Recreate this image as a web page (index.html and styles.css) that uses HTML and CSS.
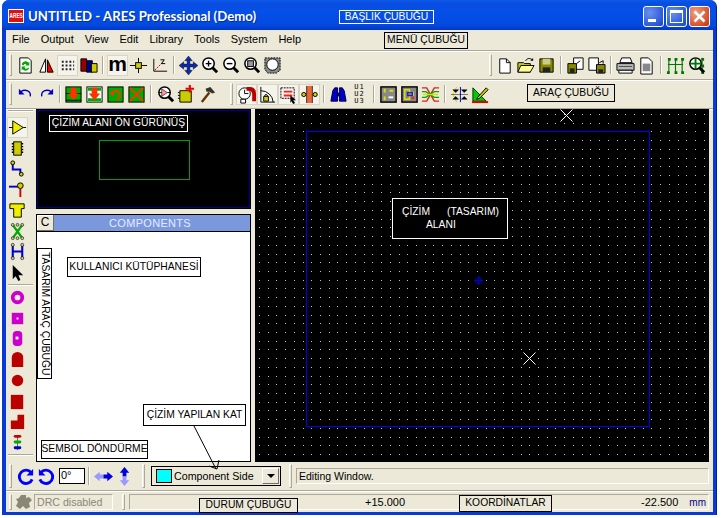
FILE: index.html
```html
<!DOCTYPE html>
<html lang="tr">
<head>
<meta charset="utf-8">
<title>ARES Professional</title>
<link rel="stylesheet" href="styles.css">
</head>
<body>
<svg class="defs" width="0" height="0">
  <defs>
    <g id="lens"><circle cx="9" cy="8" r="6" fill="#fff" stroke="#000" stroke-width="1.6"/><path d="M13 12l5 5" stroke="#000" stroke-width="3"/></g>
  </defs>
</svg>
<div class="window">
  <header class="titlebar">
    <span class="logo"><span class="logo-text">ARES</span></span>
    <span class="title">UNTITLED - ARES Professional (Demo)</span>
    <span class="winbtns">
      <span class="wb wb-blue"><i class="g-min"></i></span>
      <span class="wb wb-blue"><i class="g-max"></i></span>
      <span class="wb wb-red"><svg width="21" height="21" viewBox="0 0 21 21"><path d="M5.5 5.5l10 10M15.5 5.5l-10 10" stroke="#fff" stroke-width="2.6"/></svg></span>
    </span>
  </header>
  <div class="client">
    <nav class="menubar">
      <span>File</span><span>Output</span><span>View</span><span>Edit</span><span>Library</span><span>Tools</span><span>System</span><span>Help</span>
    </nav>
    <div class="tb">
      <i class="grip"></i>
      <span class="b"><svg class="ic" viewBox="0 0 20 20"><path d="M4 2h9l3 3v13H4z" fill="#fff" stroke="#000"/><path d="M6 9a4 4 0 0 1 7-2l1-1v4h-4l1-1a2 2 0 0 0-3 1z" fill="#0a0"/><path d="M14 12a4 4 0 0 1-7 2l-1 1v-4h4l-1 1a2 2 0 0 0 3 1z" fill="#0a0"/></svg></span>
      <span class="b"><svg class="ic" viewBox="0 0 20 20"><path d="M9 3L3 17h6z" fill="#fff" stroke="#000"/><path d="M11 4v13h6z" fill="#e00" stroke="#000"/></svg></span>
      <span class="b on"><svg class="ic" viewBox="0 0 20 20"><path d="M4 5h2v2H4zM8 5h2v2H8zM12 5h2v2h-2zM16 5h1v2h-1zM4 9h2v2H4zM8 9h2v2H8zM12 9h2v2h-2zM16 9h1v2h-1zM4 13h2v2H4zM8 13h2v2H8zM12 13h2v2h-2zM16 13h1v2h-1z" fill="#222"/></svg></span>
      <span class="b"><svg class="ic" viewBox="0 0 20 20"><path d="M2 3h6v13H2z" fill="#900" stroke="#000"/><path d="M8 5h6v12H8z" fill="#008" stroke="#000"/><path d="M13 8h6v9h-6z" fill="#cc0" stroke="#000"/></svg></span>
      <i class="sep"></i>
      <span class="b on"><span class="mglyph">m</span></span>
      <span class="b"><svg class="ic" viewBox="0 0 20 20"><path d="M1 10h18M10 2v16" stroke="#000"/><rect x="7" y="7" width="6" height="6" fill="#cc0" stroke="#000"/></svg></span>
      <span class="b"><svg class="ic" viewBox="0 0 20 20"><path d="M4 3v13h14" fill="none" stroke="#000"/><path d="M5 15L14 6" stroke="#c00" stroke-dasharray="2 1"/><path d="M11 4h4l-3 4h4" fill="none" stroke="#000"/></svg></span>
      <i class="sep"></i>
      <span class="b"><svg class="ic" viewBox="0 0 20 20"><path d="M10 0l4 5h-2.500v3.500H15V6l5 4-5 4v-2.500h-3.500V15H14l-4 5-4-5h2.500v-3.500H5V14l-5-4 5-4v2.500h3.500V5H6z" fill="#0a2aa8" stroke="#000" stroke-width=".4"/></svg></span>
      <span class="b"><svg class="ic" viewBox="0 0 20 20"><use href="#lens"/><path d="M6 8h6M9 5v6" stroke="#000" stroke-width="1.500"/></svg></span>
      <span class="b"><svg class="ic" viewBox="0 0 20 20"><use href="#lens"/><path d="M6 8h6" stroke="#000" stroke-width="1.500"/></svg></span>
      <span class="b"><svg class="ic" viewBox="0 0 20 20"><use href="#lens"/><rect x="6" y="5" width="6" height="6" fill="#999" stroke="#000"/></svg></span>
      <span class="b"><svg class="ic" viewBox="0 0 20 20"><path d="M2 2h16v13l-4 3H5l-3-4z" fill="#888" stroke="#000" stroke-dasharray="2 1"/><circle cx="10" cy="9" r="6" fill="#fff" stroke="#000"/></svg></span>
      <i class="fill"></i>
      <i class="grip grip-end"></i>
      <span class="b"><svg class="ic" viewBox="0 0 20 20"><path d="M5 3h7l4 4v11H5z" fill="#fff" stroke="#000"/><path d="M12 3v4h4" fill="none" stroke="#000"/></svg></span>
      <span class="b"><svg class="ic" viewBox="0 0 20 20"><path d="M2 7h6l1 1h6v9H2z" fill="#cc0" stroke="#000"/><path d="M2 17l3-7h14l-4 7z" fill="#ff9" stroke="#000"/><path d="M10 5c2-3 5-3 7-1" fill="none" stroke="#000"/><path d="M18 2v3h-3z"/></svg></span>
      <span class="b"><svg class="ic" viewBox="0 0 20 20"><path d="M3 3h14v14H3z" fill="#880" stroke="#000"/><path d="M6 3h8v6H6z" fill="#cc8"/><path d="M6 12h8v5H6z" fill="#222"/></svg></span>
      <i class="sep"></i>
      <span class="b"><svg class="ic" viewBox="0 0 20 20"><path d="M8 2h10v12H8z" fill="#fff" stroke="#000"/><path d="M2 8h9v10H2z" fill="#880" stroke="#000"/><path d="M4 13h5v5H4z" fill="#222"/><path d="M11 8l4-3" stroke="#000"/></svg></span>
      <span class="b"><svg class="ic" viewBox="0 0 20 20"><path d="M2 2h10v13H2z" fill="#fff" stroke="#000"/><path d="M10 9h9v9h-9z" fill="#880" stroke="#000"/><path d="M12 14h5v4h-5z" fill="#222"/><path d="M13 7l4-2v3" fill="none" stroke="#000"/></svg></span>
      <i class="sep"></i>
      <span class="b"><svg class="ic" viewBox="0 0 20 20"><path d="M6 2h9l2 5H4z" fill="#fff" stroke="#000"/><path d="M1 8h18v7H1z" fill="#bbb" stroke="#000"/><path d="M3 15h14v3H3z" fill="#fff" stroke="#000"/><path d="M3 11h14" stroke="#444"/></svg></span>
      <span class="b"><svg class="ic" viewBox="0 0 20 20"><path d="M4 2h8l4 4v13H4z" fill="#fff" stroke="#000"/><rect x="6" y="8" width="8" height="8" fill="#888"/></svg></span>
      <i class="sep"></i>
      <span class="b"><svg class="ic" viewBox="0 0 20 20"><path d="M2 9h16M3 3v14M10 3v14M17 3v14" fill="none" stroke="#070" stroke-width="1.200"/><path d="M1 16h3v3H1zM9 16h3v3H9zM16 16h3v3h-3zM9 2h3v3H9zM16 2h3v3h-3zM2 2h3v3H2z" fill="#070"/></svg></span>
      <span class="b"><svg class="ic" viewBox="0 0 20 20"><path d="M16 2v16" stroke="#070"/><path d="M15 2h3v3h-3zM15 9h3v3h-3zM15 16h3v3h-3z" fill="#070"/><use href="#lens"/><path d="M3 8h12M9 2v12" stroke="#070" stroke-width="2"/></svg></span>
    </div>
    <div class="tb">
      <i class="grip"></i>
      <span class="b"><svg class="ic" viewBox="0 0 20 20"><path d="M5 7c5-3 11-1 10 5" fill="none" stroke="#00c" stroke-width="1.500"/><path d="M3 4v6h6z" fill="#00c"/></svg></span>
      <span class="b"><svg class="ic" viewBox="0 0 20 20"><path d="M15 7C10 4 4 6 5 12" fill="none" stroke="#00c" stroke-width="1.500"/><path d="M17 4v6h-6z" fill="#00c"/></svg></span>
      <i class="sep sep-n"></i>
      <span class="b"><svg class="ic" viewBox="0 0 20 20"><rect x="2" y="2" width="16" height="16" fill="#0a0" stroke="#000"/><path d="M2 9h16M2 16h16" stroke="#000"/><path d="M7 3h6v6h3l-6 7-6-7h3z" fill="#f30"/></svg></span>
      <span class="b"><svg class="ic" viewBox="0 0 20 20"><rect x="2" y="2" width="16" height="16" fill="#fff" stroke="#000"/><path d="M3 3h14v3H3zM3 14h14v3H3z" fill="#0a0"/><path d="M7 3h6v6h3l-6 7-6-7h3z" fill="#f30"/></svg></span>
      <span class="b"><svg class="ic" viewBox="0 0 20 20"><rect x="2" y="2" width="16" height="16" fill="#0a0" stroke="#000"/><path d="M6 9a4.500 4.500 0 1 1 5 6" fill="none" stroke="#f30" stroke-width="2"/><path d="M3 8l5-1v5z" fill="#f30"/></svg></span>
      <span class="b"><svg class="ic" viewBox="0 0 20 20"><rect x="2" y="2" width="16" height="16" fill="#0a0" stroke="#000"/><path d="M3 3l14 14M17 3L3 17" stroke="#f30" stroke-width="2"/></svg></span>
      <i class="sep"></i>
      <span class="b"><svg class="ic" viewBox="0 0 20 20"><use href="#lens"/><path d="M6 4v8l6-4z" fill="#f99" stroke="#000" stroke-width=".6"/><path d="M3 8h3M12 8h3" stroke="#000"/></svg></span>
      <span class="b"><svg class="ic" viewBox="0 0 20 20"><path d="M3 6h12v12H3z" fill="#cc0" stroke="#000"/><path d="M1 8h2M1 11h2M1 14h2" stroke="#000"/><path d="M9 4h9M13.500 0v8" stroke="#e00" stroke-width="2.200"/></svg></span>
      <span class="b"><svg class="ic" viewBox="0 0 20 20"><path d="M4 18L12 8" stroke="#630" stroke-width="2.500"/><path d="M8 4l5-2 5 6-3 1-3-2-3 0z" fill="#333"/></svg></span>
      <i class="grip grip-mid"></i>
      <span class="b on"><svg class="ic" viewBox="0 0 20 20"><circle cx="8" cy="9" r="6" fill="#fff" stroke="#000"/><path d="M8 5v4h4" fill="none" stroke="#000"/><path d="M10 2h4c5 0 6 4 6 8v7h-4v-7c0-2-1-4-3-4h-3z" fill="#b00"/><path d="M4 15h5v4H4z" fill="#fff" stroke="#000"/></svg></span>
      <span class="b on"><svg class="ic" viewBox="0 0 20 20"><path d="M3 2v16h15" fill="none" stroke="#000"/><path d="M3 6a13 13 0 0 1 13 12" fill="none" stroke="#000"/><path d="M6 12h5v5H6z" fill="#cc0" stroke="#000"/><path d="M7 12a1.500 2 0 0 1 3 0" fill="none" stroke="#000"/></svg></span>
      <span class="b on"><svg class="ic" viewBox="0 0 20 20"><rect x="2" y="3" width="14" height="11" fill="none" stroke="#000" stroke-dasharray="2 1"/><path d="M5 6h9v2H5zM5 10h9v2H5z" fill="#e22"/><path d="M12 11l6 5-3 0 2 3-2 1-2-3-1 2z"/></svg></span>
      <span class="b on"><svg class="ic" viewBox="0 0 20 20"><rect x="7" y="1" width="6" height="18" fill="#e63"/><path d="M7 1v18M13 1v18" stroke="#333"/><circle cx="4" cy="10" r="2.200" fill="#cc0" stroke="#000"/><circle cx="16" cy="10" r="2.200" fill="#cc0" stroke="#000"/></svg></span>
      <i class="sep"></i>
      <span class="b"><svg class="ic" viewBox="0 0 20 20"><path d="M2 17l2-11 2-3h3v14zM18 17l-2-11-2-3h-3v14z" fill="#00c" stroke="#003"/><path d="M8 8h4v4H8z" fill="#006"/></svg></span>
      <span class="b"><span class="u123">U1<br>U2<br>U3</span></span>
      <i class="sep"></i>
      <span class="b"><svg class="ic" viewBox="0 0 20 20"><rect x="2" y="2" width="16" height="16" fill="#888" stroke="#000" stroke-width="1.500"/><path d="M5 4h2v4H5zM5 12h2v4H5zM11 5h4v2h-4z" fill="#dd0"/><path d="M10 12h5v2h-5z" fill="#fff"/></svg></span>
      <span class="b"><svg class="ic" viewBox="0 0 20 20"><rect x="2" y="2" width="16" height="16" fill="#888" stroke="#000" stroke-width="1.500"/><path d="M5 5h5v3h4v3h-4v4H5z" fill="none" stroke="#dd0" stroke-width="1.500"/><path d="M8 8h5v3H8z" fill="none" stroke="#22c" stroke-width="1.500"/><path d="M12 12h3v3h-3z" fill="#d33"/></svg></span>
      <span class="b"><svg class="ic" viewBox="0 0 20 20"><path d="M1 3h5l8 14h5M1 17h5l8-14h5" fill="none" stroke="#d22" stroke-width="1.500"/><path d="M1 7h4l9 6h5M1 13h4l9-6h5" fill="none" stroke="#0a0" stroke-width="1.500"/><path d="M2 10h16" stroke="#dd0" stroke-width="1.500"/></svg></span>
      <i class="sep"></i>
      <span class="b"><svg class="ic" viewBox="0 0 20 20"><path d="M7 2l-4 8 4 8" fill="none" stroke="#cc0"/><path d="M11 2v16" stroke="#00c"/><path d="M3 5h6l-3 3zM12 5h6l-3 3zM3 15h6l-3-3zM12 15h6l-3-3zM1 10h18" stroke="#000" fill="#000" stroke-width=".5"/></svg></span>
      <span class="b"><svg class="ic" viewBox="0 0 20 20"><path d="M2 3v14h14z" fill="#0c0" stroke="#030"/><path d="M1 18h17" stroke="#d00" stroke-width="2"/><path d="M7 13l9-10 2 2-9 9-3 1z" fill="#cc0" stroke="#000"/></svg></span>
      <i class="fill"></i>
    </div>
    <main class="main">
      <aside class="leftbar">
        <i class="hsep"></i>
        <span class="b on"><svg class="ic" viewBox="0 0 20 20"><path d="M5 3l11 7-11 7z" fill="#ee0" stroke="#000"/><path d="M1 10h4M16 10h3" stroke="#000"/></svg></span>
        <span class="b"><svg class="ic" viewBox="0 0 20 20"><rect x="6" y="3" width="8" height="14" fill="#cc0" stroke="#000"/><path d="M4 5h2M4 8h2M4 11h2M4 14h2M14 5h2M14 8h2M14 11h2M14 14h2" stroke="#000" stroke-width="1.500"/></svg></span>
        <span class="b"><svg class="ic" viewBox="0 0 20 20"><path d="M5 5v6h8v5" fill="none" stroke="#00c" stroke-width="2"/><circle cx="5" cy="4" r="2" fill="#cc0" stroke="#000"/><circle cx="14" cy="16" r="2" fill="#cc0" stroke="#000"/></svg></span>
        <span class="b"><svg class="ic" viewBox="0 0 20 20"><path d="M1 7h11" stroke="#00c" stroke-width="2"/><path d="M13 9v9" stroke="#d00" stroke-width="2"/><circle cx="13" cy="6" r="3" fill="#cc0" stroke="#000"/></svg></span>
        <span class="b"><svg class="ic" viewBox="0 0 20 20"><path d="M2 3h15v5h-3v9H6V8H2z" fill="#ee0" stroke="#000"/></svg></span>
        <span class="b"><svg class="ic" viewBox="0 0 20 20"><path d="M5 3l10 14M15 3L5 17" stroke="#0a0" stroke-width="2.500"/><circle cx="5" cy="3" r="1.500" fill="#cc8" stroke="#000" stroke-width=".6"/><circle cx="15" cy="3" r="1.500" fill="#cc8" stroke="#000" stroke-width=".6"/><circle cx="10" cy="3" r="1.500" fill="#cc8" stroke="#000" stroke-width=".6"/><circle cx="5" cy="17" r="1.500" fill="#cc8" stroke="#000" stroke-width=".6"/><circle cx="15" cy="17" r="1.500" fill="#cc8" stroke="#000" stroke-width=".6"/><circle cx="10" cy="17" r="1.500" fill="#cc8" stroke="#000" stroke-width=".6"/></svg></span>
        <span class="b"><svg class="ic" viewBox="0 0 20 20"><path d="M5 3v14M15 3v14M5 10h10" stroke="#00c" stroke-width="2.200"/><circle cx="5" cy="3" r="1.600" fill="#cc8" stroke="#000" stroke-width=".6"/><circle cx="15" cy="3" r="1.600" fill="#cc8" stroke="#000" stroke-width=".6"/><circle cx="5" cy="17" r="1.600" fill="#cc8" stroke="#000" stroke-width=".6"/><circle cx="15" cy="17" r="1.600" fill="#cc8" stroke="#000" stroke-width=".6"/></svg></span>
        <span class="b"><svg class="ic" viewBox="0 0 20 20"><path d="M5 2l11 11-5 0 2 5-2 1-3-5-3 3z" fill="#000"/></svg></span>
        <i class="hsep"></i>
        <span class="b"><svg class="ic" viewBox="0 0 20 20"><circle cx="10" cy="10" r="5" fill="none" stroke="#c0c" stroke-width="4"/><circle cx="10" cy="10" r="1" fill="#fff"/></svg></span>
        <span class="b"><svg class="ic" viewBox="0 0 20 20"><rect x="4" y="4" width="12" height="12" fill="#c0c"/><rect x="9" y="9" width="2" height="2" fill="#fff"/></svg></span>
        <span class="b"><svg class="ic" viewBox="0 0 20 20"><rect x="5" y="2" width="10" height="16" rx="4" fill="#c0c"/><rect x="8" y="8" width="3" height="3" fill="#fff"/></svg></span>
        <span class="b"><svg class="ic" viewBox="0 0 20 20"><path d="M4 8a6 6 0 0 1 12 0v10H4z" fill="#b00"/></svg></span>
        <span class="b"><svg class="ic" viewBox="0 0 20 20"><circle cx="10" cy="10" r="6" fill="#b00"/></svg></span>
        <span class="b"><svg class="ic" viewBox="0 0 20 20"><rect x="3" y="3" width="13" height="15" fill="#b00"/></svg></span>
        <span class="b"><svg class="ic" viewBox="0 0 20 20"><path d="M10 3h7v15H3V9h7z" fill="#b00"/></svg></span>
        <span class="b"><svg class="ic" viewBox="0 0 20 20"><path d="M10 2v16" stroke="#666"/><rect x="6" y="2" width="8" height="3" rx="1.500" fill="#c00"/><rect x="6" y="8" width="8" height="3" rx="1.500" fill="#0a0"/><rect x="6" y="14" width="8" height="3" rx="1.500" fill="#00c"/></svg></span>
        <i class="hsep"></i>
      </aside>
      <section class="sidecol">
        <div class="preview"><div class="preview-view"></div></div>
        <div class="parts">
          <div class="parts-head"><span class="cbtn">C</span><span class="parts-title">COMPONENTS</span></div>
          <div class="parts-body"></div>
        </div>
      </section>
      <section class="canvas">
        <svg class="dots" width="454" height="353" viewBox="0 0 454 353"><path class="dotpath" d="M4 5.500h450M4 14.220h450M4 22.940h450M4 31.660h450M4 40.380h450M4 49.100h450M4 57.820h450M4 66.540h450M4 75.260h450M4 83.980h450M4 92.700h450M4 101.420h450M4 110.140h450M4 118.860h450M4 127.580h450M4 136.300h450M4 145.020h450M4 153.740h450M4 162.460h450M4 171.180h450M4 179.900h450M4 188.620h450M4 197.340h450M4 206.060h450M4 214.780h450M4 223.500h450M4 232.220h450M4 240.940h450M4 249.660h450M4 258.380h450M4 267.100h450M4 275.820h450M4 284.540h450M4 293.260h450M4 301.980h450M4 310.700h450M4 319.420h450M4 328.140h450M4 336.860h450M4 345.580h450"/></svg>
        <div class="board"></div>
        <svg class="mark mark-a" width="13" height="13" viewBox="0 0 13 13"><path d="M.5.500l12 12M12.500.500l-12 12" stroke="#fff"/></svg>
        <svg class="mark mark-b" width="13" height="13" viewBox="0 0 13 13"><path d="M.5.500l12 12M12.500.500l-12 12" stroke="#fff"/></svg>
        <svg class="mark mark-o" width="9" height="9" viewBox="0 0 9 9"><circle cx="4.500" cy="4.500" r="3" fill="none" stroke="#00c"/><path d="M4.500 0v9M0 4.500h9" stroke="#00c"/></svg>
        <div class="note note-dark note-area"><span>ÇİZİM<span class="area-gap">(TASARIM)</span></span><span class="area-2">ALANI</span></div>
      </section>
    </main>
    <div class="optbar">
      <i class="grip"></i>
      <span class="b"><svg class="ic" viewBox="0 0 20 20"><path d="M16 6a7 7 0 1 0 1 7" fill="none" stroke="#00f" stroke-width="3"/><path d="M18 2v7h-7z" fill="#00f"/></svg></span>
      <span class="b"><svg class="ic" viewBox="0 0 20 20"><path d="M4 6a7 7 0 1 1-1 7" fill="none" stroke="#00f" stroke-width="3"/><path d="M2 2v7h7z" fill="#00f"/></svg></span>
      <span class="angle">0°</span>
      <i class="sep"></i>
      <span class="b"><svg class="ic" viewBox="0 0 20 20"><path d="M0 10l6-5v3h4v4H6v3z" fill="#99f"/><path d="M20 10l-6-5v3h-4v4h4v3z" fill="#00d"/></svg></span>
      <span class="b"><svg class="ic" viewBox="0 0 20 20"><path d="M10 0l5 6h-3v4H8V6H5z" fill="#00d"/><path d="M10 20l5-6h-3v-4H8v4H5z" fill="#99f"/></svg></span>
      <i class="grip grip-b"></i>
      <div class="combo"><i class="swatch"></i><span class="combo-text">Component Side</span><span class="combo-btn"><i></i></span></div>
      <i class="grip grip-c"></i>
      <div class="msg">Editing Window.</div>
    </div>
    <footer class="statusbar">
      <i class="grip"></i>
      <svg class="drc" width="18" height="16" viewBox="0 0 18 16"><path d="M6 1h5v3l3-1 3 3-3 3 1 4-4 2-3-3-3 3-4-3 2-4-2-3 3-1z" fill="#8a8778"/></svg>
      <span class="drc-text">DRC disabled</span>
      <i class="grip grip-s"></i>
      <div class="coords"><span class="cx">+15.000</span><span class="cy">-22.500</span><span class="unit">mm</span></div>
    </footer>
  </div>
  <div class="note note-title">BAŞLIK ÇUBUĞU</div>
  <div class="note note-menu">MENÜ ÇUBUĞU</div>
  <div class="note note-tools">ARAÇ ÇUBUĞU</div>
  <div class="note note-dark note-prev">ÇİZİM ALANI ÖN GÜRÜNÜŞ</div>
  <div class="note note-lib">KULLANICI KÜTÜPHANESİ</div>
  <div class="note note-vert">TASARIM ARAÇ ÇUBUĞU</div>
  <div class="note note-rot">SEMBOL DÖNDÜRME</div>
  <div class="note note-layer">ÇİZİM YAPILAN KAT</div>
  <svg class="pointer" width="40" height="50" viewBox="0 0 40 50"><path d="M1 1l22 43M24 44l-8-3M24 44l2-9" fill="none" stroke="#000"/></svg>
  <div class="note note-status">DURUM ÇUBUĞU</div>
  <div class="note note-coord">KOORDİNATLAR</div>
</div>
</body>
</html>
```

FILE: styles.css
```css
* { box-sizing: border-box; }
html, body { margin: 0; padding: 0; background: #fff; }
body { width: 721px; height: 518px; overflow: hidden; font: 11px "Liberation Sans", Arial, sans-serif; color: #000; }
i { display: block; font-style: normal; }
.defs { position: absolute; }

.window { position: relative; margin-left: 2px; width: 715px; height: 515px; display: flex; flex-direction: column; background: #0a3ad6; border-radius: 7px 7px 0 0; border-right: 1px solid #0020a0; }
.titlebar { height: 30px; flex: none; display: flex; align-items: center; padding: 2px 3px 0 6px; color: #fff; border-radius: 7px 7px 0 0; background: linear-gradient(#0a5bea 0, #0a4ce0 12%, #0450e8 40%, #0349e0 85%, #0336c0 100%); }
.logo { width: 16px; height: 14px; background: #e01010; border: 1px solid #fff; display: flex; align-items: center; justify-content: center; flex: none; }
.logo-text { display: block; font: bold 8px/1 "Liberation Sans", sans-serif; color: #fff; transform: scaleX(.6); white-space: nowrap; }
.title { margin-left: 4px; font: bold 13.2px "Lato", sans-serif; white-space: nowrap; text-shadow: 1px 1px 0 #0030a0; }
.winbtns { margin-left: auto; display: flex; gap: 2px; margin-right: 3px; }
.wb { width: 21px; height: 21px; border: 1px solid #fff; border-radius: 3px; position: relative; display: block; }
.wb svg { position: absolute; left: -1px; top: -1px; }
.wb-blue { background: radial-gradient(circle at 30% 30%, #6a92f0, #2a55d8 75%, #2040c0); }
.wb-red { background: radial-gradient(circle at 30% 30%, #f0a080, #d8502c 70%, #c03010); }
.g-min { position: absolute; left: 4px; top: 12px; width: 8px; height: 3px; background: #fff; }
.g-max { position: absolute; left: 3px; top: 3px; width: 13px; height: 13px; border: 1px solid #fff; border-top-width: 3px; }

.client { flex: 1; min-height: 0; margin: 0 3px 3px 4px; background: #ece9d8; display: flex; flex-direction: column; }
.menubar { height: 21px; flex: none; display: flex; align-items: center; padding: 0 0 2px 6px; border-bottom: 1px solid #aca899; font: 11px "Liberation Sans", sans-serif; box-shadow: 0 1px 0 #fff; }
.menubar span { margin-right: 11px; white-space: nowrap; }
.tb { height: 29px; flex: none; display: flex; align-items: center; padding-right: 6px; border-bottom: 1px solid #aca899; box-shadow: 0 1px 0 #fff; }
.grip { width: 3px; height: 22px; margin: 0 3px; flex: none; border: 1px solid; border-color: #fff #aca899 #aca899 #fff; }
.grip-end { margin: 0 2px 0 0; }
.grip-mid { margin: 0 3px 0 12px; }
.fill { flex: 1; }
.b { width: 21px; height: 21px; flex: none; display: flex; align-items: center; justify-content: center; }
.on { background: #f4f3ec; box-shadow: inset 1px 1px 0 #fff, inset -1px -1px 0 #fff; outline: 1px solid #d8d5c4; outline-offset: -1px; }
.ic { width: 19px; height: 19px; display: block; }
.sep { width: 2px; height: 18px; margin: 0 3px; flex: none; border-left: 1px solid #aca899; border-right: 1px solid #fff; }
.sep-n { margin: 0 2px; }
.mglyph { font: bold 21px/17px "Liberation Sans", sans-serif; height: 21px; }
.u123 { font: 7px/7px "DejaVu Sans Mono", monospace; text-align: center; letter-spacing: 1px; }

.main { height: 353px; flex: none; display: flex; }
.leftbar { width: 30px; flex: none; padding: 0 2px 0 1px; display: flex; flex-direction: column; }
.leftbar .b { height: 20.75px; }
.hsep { height: 2px; flex: none; background: #aca899; border-bottom: 1px solid #fff; }
.leftbar .hsep:first-child { margin: 1px 1px 5px; }
.leftbar .hsep:not(:first-child) { margin: 1px 1px 1px; }
.sidecol { width: 215px; flex: none; display: flex; flex-direction: column; gap: 5px; }
.preview { height: 100px; flex: none; background: #000; border: 1px solid #000; outline: 1px solid #00008b; outline-offset: -2px; position: relative; }
.preview-view { position: absolute; left: 62px; top: 30px; width: 91px; height: 40px; border: 1px solid #00a000; }
.parts { flex: 1; min-height: 0; display: flex; flex-direction: column; border: 1px solid #000; background: #fff; }
.parts-head { height: 17px; flex: none; display: flex; border-bottom: 1px solid #000; background: #7b98dd; }
.cbtn { width: 17px; height: 16px; background: #ece9d8; font: 12px/15px "Liberation Sans", sans-serif; text-align: center; border-right: 1px solid #716f64; border-bottom: 1px solid #716f64; box-shadow: inset 1px 1px 0 #fff; }
.parts-title { flex: 1; text-align: center; font: 11px/16px "Liberation Sans", sans-serif; letter-spacing: .3px; color: #e4ecff; padding-right: 4px; }
.parts-body { flex: 1; }
.canvas { position: relative; width: 454px; margin-left: 4px; flex: none; background: #000; overflow: hidden; }
.dots { position: absolute; left: 0; top: 0; display: block; }
.dotpath { fill: none; stroke: #c4c4c4; stroke-width: 1; stroke-dasharray: 1 7.72; shape-rendering: crispEdges; }
.board { position: absolute; left: 51px; top: 22px; width: 344px; height: 296px; border: 1px solid #0000f0; }
.mark { position: absolute; display: block; }
.mark-a { left: 305px; top: 0; }
.mark-b { left: 268px; top: 243px; }
.mark-o { left: 219px; top: 167px; }

.optbar { height: 29px; flex: none; display: flex; align-items: center; border-bottom: 1px solid #aca899; box-shadow: 0 1px 0 #fff; }
.optbar .grip { height: 24px; }
.angle { width: 26px; height: 16px; margin-left: 2px; background: #fff; border: 1px solid #000; font: 11px/13px "Liberation Sans", sans-serif; padding-left: 1px; flex: none; }
.optbar .grip-b { margin: 0 6px 0 7px; }
.combo { width: 130px; height: 20px; flex: none; display: flex; align-items: center; border: 1px solid #000; background: #ece9d8; padding-left: 4px; }
.swatch { width: 16px; height: 14px; background: #00ffff; border: 1px solid #000; flex: none; }
.combo-text { margin-left: 2px; font: 10.7px "Liberation Sans", sans-serif; flex: 1; white-space: nowrap; }
.combo-btn { width: 17px; height: 16px; margin-right: 1px; background: #ece9d8; border: 1px solid; border-color: #fff #716f64 #716f64 #fff; display: flex; align-items: center; justify-content: center; }
.combo-btn i { width: 0; height: 0; border: 4px solid transparent; border-top: 4px solid #000; border-bottom: 0; }
.optbar .grip-c { margin: 0 4px 0 8px; }
.msg { flex: 1; height: 16px; margin-right: 4px; border: 1px solid; border-color: #aca899 #fff #fff #aca899; font: 10.5px/14px "Liberation Sans", sans-serif; padding-left: 2px; }
.statusbar { flex: 1; min-height: 0; display: flex; align-items: center; position: relative; }
.statusbar .grip { height: 16px; }
.drc { flex: none; }
.drc-text { width: 79px; height: 16px; margin-left: 1px; flex: none; border: 1px solid; border-color: #aca899 #fff #fff #aca899; color: #8a8778; font: 10.6px/14px "Liberation Sans", sans-serif; padding-left: 2px; }
.statusbar .grip-s { margin: 0 4px 0 9px; }
.coords { flex: 1; height: 16px; margin-right: 4px; border: 1px solid; border-color: #aca899 #fff #fff #aca899; display: flex; font: 11px/15px "Liberation Sans", sans-serif; }
.cx { margin-left: 235px; }
.cy { margin-left: auto; }
.unit { margin: 0 2px 0 11px; color: #00008b; font-size: 10px; }

.note { position: absolute; font: 10.3px/1 "Liberation Sans", sans-serif; background: #ece9d8; border: 1px solid #000; white-space: nowrap; display: flex; align-items: center; justify-content: center; }
.note-dark { background: #000; border-color: #fff; color: #fff; }
.note-title { left: 337px; top: 10px; width: 95px; height: 14px; background: transparent; border-color: #fff; color: #fff; }
.note-menu { left: 382px; top: 32px; width: 84px; height: 17px; }
.note-tools { left: 525px; top: 84px; width: 88px; height: 18px; }
.note-prev { left: 47px; top: 115px; width: 139px; height: 17px; }
.note-lib { left: 65px; top: 257px; width: 134px; height: 20px; background: #fff; }
.note-vert { left: 35px; top: 248px; width: 15px; height: 131px; writing-mode: vertical-rl; background: #fff; }
.note-rot { left: 39px; top: 440px; width: 107px; height: 19px; background: #fff; }
.note-layer { left: 141px; top: 404px; width: 103px; height: 22px; background: #fff; }
.note-status { left: 197px; top: 498px; width: 99px; height: 15px; }
.note-coord { left: 457px; top: 495px; width: 93px; height: 17px; }
.note-area { left: 137px; top: 89px; width: 116px; height: 41px; flex-direction: column; align-items: flex-start; justify-content: center; gap: 3px; padding-left: 9px; }
.area-gap { margin-left: 17px; }
.area-2 { margin-left: 24px; }
.pointer { position: absolute; left: 191px; top: 425px; display: block; }
```
